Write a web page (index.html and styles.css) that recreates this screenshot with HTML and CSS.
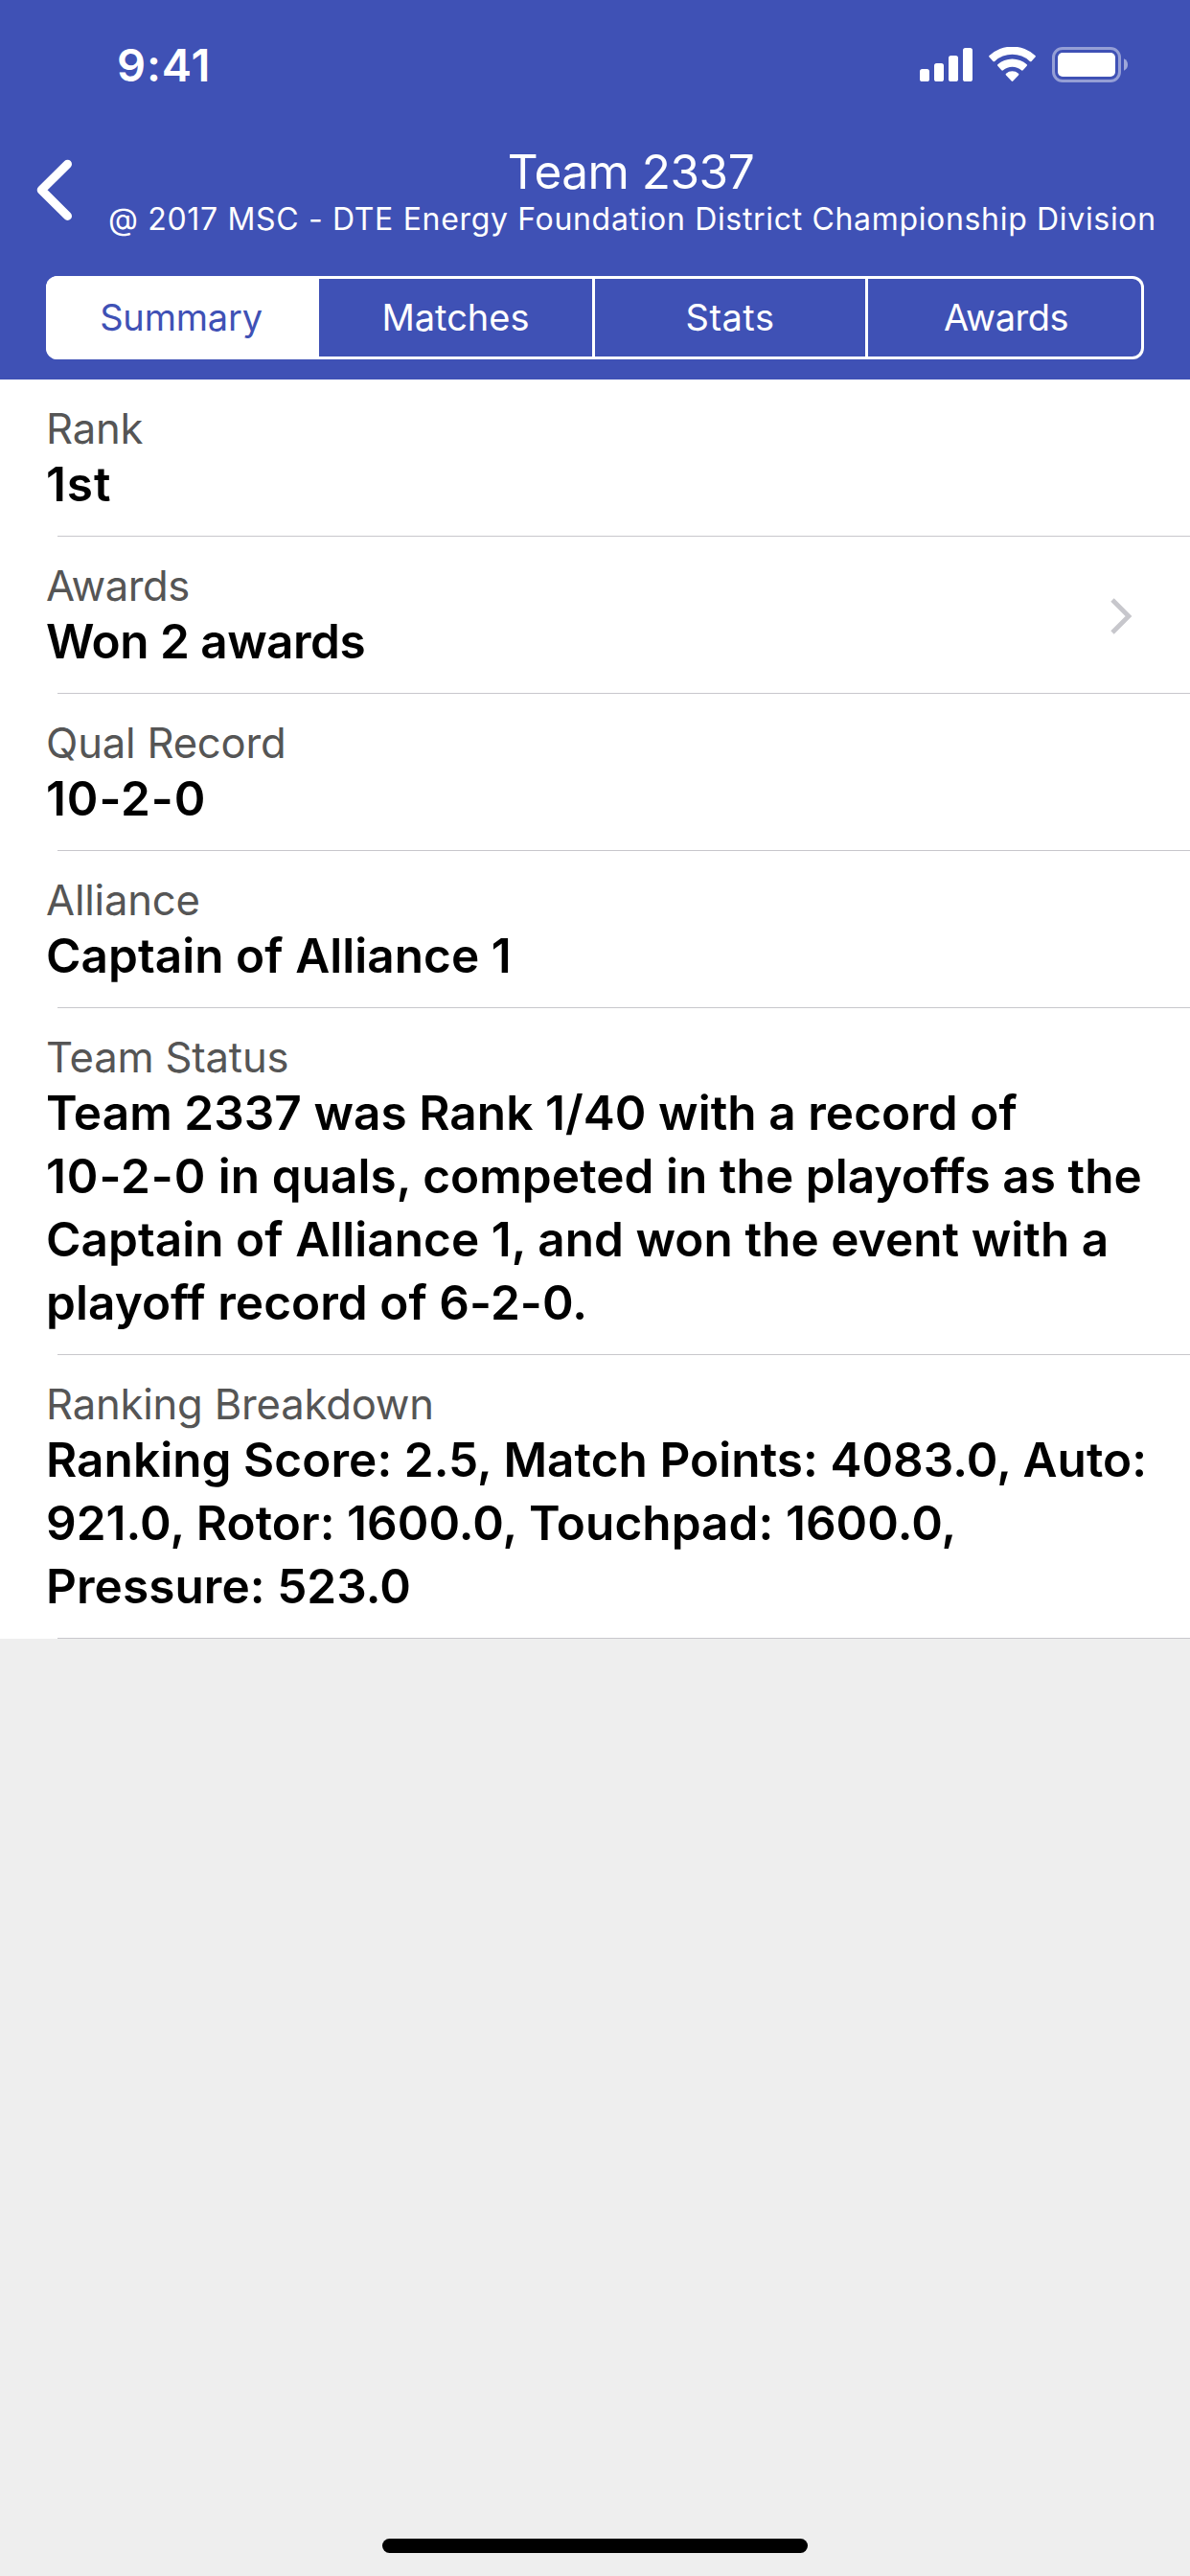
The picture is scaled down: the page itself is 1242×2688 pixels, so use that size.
FILE: index.html
```
<!DOCTYPE html>
<html lang="en">
<head>
<meta charset="utf-8">
<title>Team 2337</title>
<link rel="stylesheet" href="styles.css">
</head>
<body>
<div class="screen">
  <header class="header">
    <div class="status">
      <span class="time">9:41</span>
      <svg class="status-icons" width="218" height="37" viewBox="0 0 218 37" fill="#fff">
        <rect x="0" y="23" width="10" height="13" rx="2.6"/>
        <rect x="15" y="17" width="10" height="19" rx="2.6"/>
        <rect x="30" y="9" width="10" height="27" rx="2.6"/>
        <rect x="45" y="1" width="10" height="35" rx="2.6"/>
        <path d="M72.5 10.6a1 1 0 0 1 0-1.5a35 35 0 0 1 48 0a1 1 0 0 1 0 1.5l-4 4.3q-.8.8-1.7 0a27 27 0 0 0-36.6 0q-.9.8-1.7 0z"/>
        <path d="M81.3 19.8a1 1 0 0 1 0-1.5a22.500 22.500 0 0 1 30.400 0a1 1 0 0 1 0 1.500l-4 4.500q-.9.8-1.700 0a14.500 14.500 0 0 0-19 0q-.8.8-1.700 0z"/>
        <path d="M90 29.4q-.9-.9 0-1.7a10 10 0 0 1 13 0q.9.8 0 1.7l-5.700 6.200q-.8.9-1.600 0z"/>
        <rect x="139.5" y="1.5" width="69" height="34" rx="9.5" fill="none" stroke="#fff" stroke-opacity=".45" stroke-width="3"/>
        <rect x="144" y="6" width="60" height="25" rx="5"/>
        <path d="M213 12.3q4 1.900 4 6.200t-4 6.200z" fill-opacity=".5"/>
      </svg>
    </div>
    <div class="nav">
      <svg class="back" width="40" height="66" viewBox="0 0 40 66" fill="none" stroke="#fff" stroke-width="9" stroke-linecap="round" stroke-linejoin="round"><path d="M32.500 6.200L5.200 33.300L32.500 60.400"/></svg>
      <div class="titles">
        <h1 class="title">Team 2337</h1>
        <p class="subtitle">@ 2017 MSC - DTE Energy Foundation District Championship Division</p>
      </div>
    </div>
    <div class="tabs">
      <span class="tab active">Summary</span>
      <span class="tab">Matches</span>
      <span class="tab divided wide">Stats</span>
      <span class="tab divided last">Awards</span>
    </div>
  </header>
  <main class="list">
    <section class="row"><div class="label">Rank</div><div class="value loose">1st</div></section>
    <section class="row link">
      <div><div class="label tight">Awards</div><div class="value tight">Won 2 awards</div></div>
      <svg class="chevron" width="26" height="40" viewBox="0 0 26 40" fill="none" stroke="#c7c7cc" stroke-width="4.8"><path d="M3 3L20 20L3 37"/></svg>
    </section>
    <section class="row"><div class="label">Qual Record</div><div class="value"><span class="loose">10-2-0</span></div></section>
    <section class="row"><div class="label">Alliance</div><div class="value">Captain of Alliance 1</div></section>
    <section class="row"><div class="label">Team Status</div><div class="value">Team 2337 was Rank 1/40 with a record of<br><span class="loose">10-2-0</span> in quals, competed in the playoffs as the<br>Captain of Alliance 1, and won the event with a<br>playoff record of 6-2-0.</div></section>
    <section class="row"><div class="label">Ranking Breakdown</div><div class="value">Ranking Score: 2.5, Match Points: 4083.0, Auto:<br>921.0, Rotor: 1600.0, Touchpad: 1600.0,<br>Pressure: 523.0</div></section>
  </main>
  <div class="home"></div>
</div>
</body>
</html>
```
FILE: styles.css
```
* { box-sizing: border-box; }
body {
  margin: 0;
  background: #eee;
  font-family: Inter, "Liberation Sans", sans-serif;
}
.screen {
  display: flex;
  flex-direction: column;
  width: 1242px;
  height: 2688px;
  overflow: hidden;
}
.header {
  height: 396px;
  background: #3f51b5;
  color: #fff;
}
.status {
  display: flex;
  justify-content: space-between;
  height: 132px;
  padding: 38px 64px 0 122px;
}
.time {
  font-size: 47px;
  font-weight: 600;
  line-height: 60px;
  letter-spacing: .9px;
}
.status-icons { margin-top: 11px; }
.nav {
  display: flex;
  height: 156px;
  padding-left: 38px;
}
.back { margin-top: 33px; }
.titles {
  width: 1091px;
  margin-left: 35px;
  padding-top: 17px;
  text-align: center;
  white-space: nowrap;
}
.title, .subtitle { margin: 0; font-weight: 400; }
.title { font-size: 49.5px; line-height: 60px; letter-spacing: -.5px; }
.subtitle { font-size: 32px; line-height: 40px; letter-spacing: .67px; }
.tabs {
  display: grid;
  grid-template-columns: 285px 285px 285px 291px;
  width: 1146px;
  height: 87px;
  margin-left: 48px;
  border-radius: 12px;
  box-shadow: inset 0 0 0 3px #fff;
  overflow: hidden;
}
.tab {
  font-size: 38px;
  line-height: 87px;
  text-align: center;
}
.tab.active {
  padding-right: 3px;
  background: #fff;
  color: #3f51b5;
  letter-spacing: -.2px;
}
.tab.divided { border-left: 3px solid #fff; }
.tab.wide { letter-spacing: .5px; }
.tab.last { letter-spacing: -.5px; }
.list { background: #fff; }
.row {
  padding: 26px 0 22px 48px;
  background: linear-gradient(#c8c7cc, #c8c7cc) 60px 100% / 100% 1px no-repeat;
}
.link {
  display: flex;
  justify-content: space-between;
  align-items: center;
  padding-right: 58px;
}
.chevron { margin-bottom: 2px; }
.label {
  padding-top: 1px;
  height: 50px;
  color: #555;
  font-size: 43.6px;
  line-height: 50px;
  letter-spacing: -.2px;
}
.value {
  color: #000;
  font-size: 49.5px;
  font-weight: 600;
  line-height: 66px;
  letter-spacing: .06px;
  white-space: nowrap;
}
.tight { letter-spacing: -.5px; }
.loose { letter-spacing: .9px; }
.home {
  width: 444px;
  height: 15px;
  margin: auto auto 24px;
  border-radius: 8px;
  background: #000;
}
```
